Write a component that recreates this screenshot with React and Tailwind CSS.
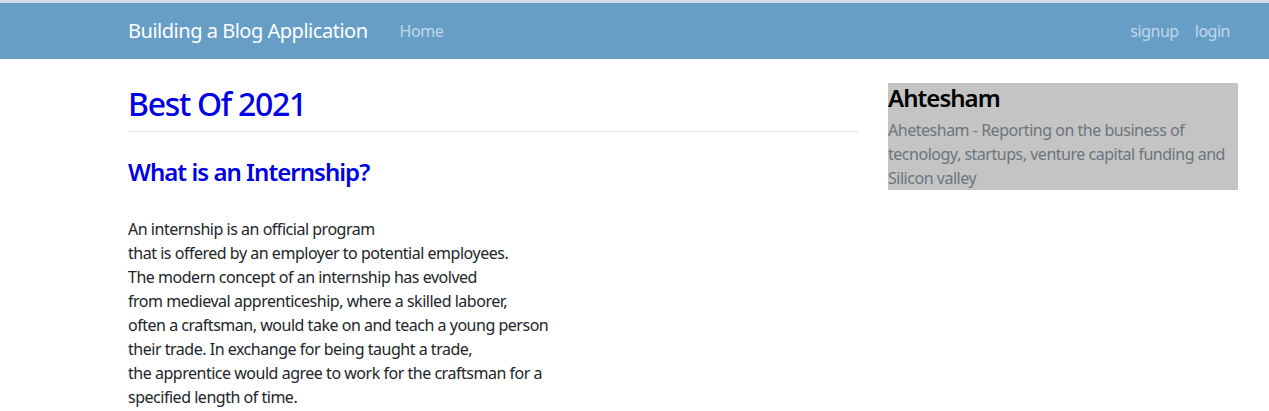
const paragraph = [
  'An internship is an official program',
  'that is offered by an employer to potential employees.',
  'The modern concept of an internship has evolved',
  'from medieval apprenticeship, where a skilled laborer,',
  'often a craftsman, would take on and teach a young person',
  'their trade. In exchange for being taught a trade,',
  'the apprentice would agree to work for the craftsman for a',
  'specified length of time.',
];

const Navbar = () => (
  <div className="border-t-[3px] border-[#d3dde7]">
    <nav className="bg-[#669ec6] h-14 flex items-center pl-[128px] pr-[39px]">
      <span className="text-xl text-white">Building a Blog Application</span>
      <a className="ml-[32px] text-base text-[#c0d7e8]">Home</a>
      <div className="ml-auto flex items-center gap-4">
        <a className="text-base text-[#c0d7e8]">signup</a>
        <a className="text-base text-[#c0d7e8]">login</a>
      </div>
    </nav>
  </div>
);

export default function App() {
  return (
    <div className="min-h-screen bg-white font-['Segoe_UI','Noto_Sans',sans-serif] tracking-[-0.03em] text-[#212529]">
      <Navbar />
      <div className="pl-[128px] pt-6 flex gap-[30px]">
        {/* Main column */}
        <div className="w-[730px]">
          <h2 className="pt-[2px] text-[32px] leading-[38px] font-medium tracking-[-0.04em] text-[#0000e6] mb-2">Best Of 2021</h2>
          <div className="border-t border-[#e2e2e2]" />
          <h4 className="mt-[25px] text-2xl leading-[29px] font-semibold tracking-[-0.04em] text-[#0000e6]">What is an Internship?</h4>
          <p className="mt-[31px] text-base leading-6">
            {paragraph.map((line) => (
              <span key={line} className="block">{line}</span>
            ))}
          </p>
        </div>

        {/* Sidebar */}
        <div className="w-[350px] self-start bg-[#c4c4c4]">
          <h4 className="text-2xl leading-[29px] font-semibold tracking-[-0.04em] text-black mb-1.5">Ahtesham</h4>
          <p className="text-base leading-6 text-[#6c757d]">
            Ahetesham - Reporting on the business of tecnology, startups, venture capital funding and Silicon valley
          </p>
        </div>
      </div>
    </div>
  );
}
